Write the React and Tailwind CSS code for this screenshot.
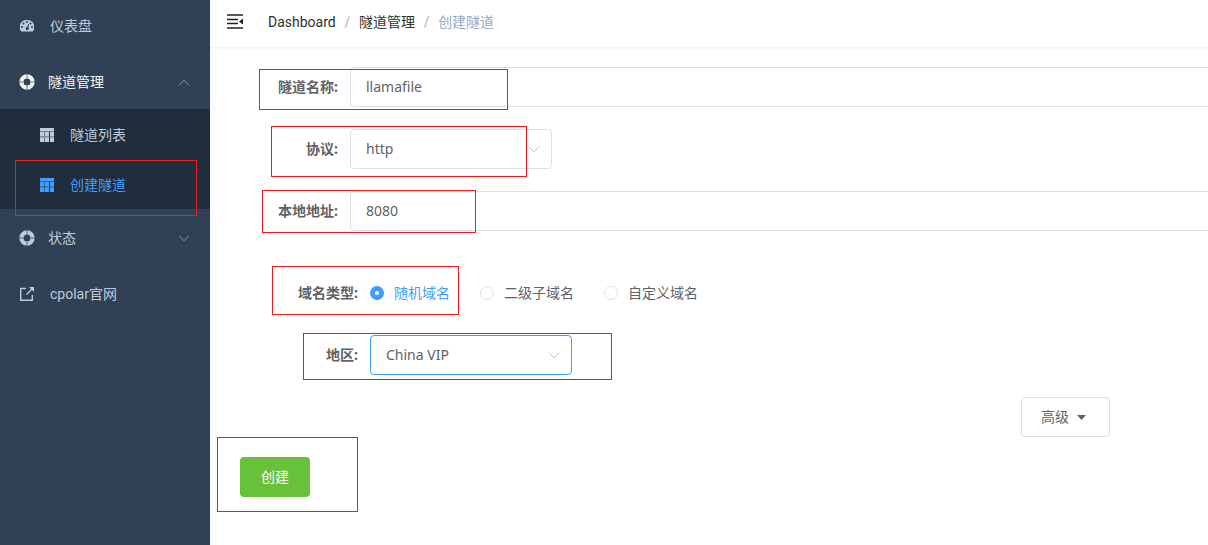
import { useState } from 'react'

function DashboardIcon() {
  return (
    <svg className="mr-4 h-[14px] w-[14px] shrink-0" viewBox="0 0 14 14" fill="currentColor" aria-hidden="true">
      <path
        fillRule="evenodd"
        d="M7 1a7 7 0 0 1 5.9 11.300q-.2.2-.5.2H1.600q-.3 0-.5-.2A7 7 0 0 1 7 1z
          M2 7a1 1 0 1 0 0 2 1 1 0 0 0 0-2z
          M3.500 3.500a1 1 0 1 0 0 2 1 1 0 0 0 0-2z
          M7 2a1 1 0 1 0 0 2 1 1 0 0 0 0-2z
          M10.500 3.500a1 1 0 1 0 0 2 1 1 0 0 0 0-2z
          M12 7a1 1 0 1 0 0 2 1 1 0 0 0 0-2z
          M8.100 5.100l-.8 3a1.500 1.500 0 1 0 .9.3l.8-3q0-.4-.4-.5t-.5.200z"
      />
    </svg>
  )
}

function HelpIcon() {
  return (
    <svg className="-ml-px mr-[13px] h-4 w-4 shrink-0" viewBox="0 0 16 16" fill="none" stroke="currentColor" aria-hidden="true">
      <circle cx="8" cy="8" r="5.600" strokeWidth="4.200" />
      <path d="M8 0v4M8 12v4M0 8h4M12 8h4" stroke="#304156" strokeWidth="0.700" />
    </svg>
  )
}

function TableIcon() {
  return (
    <svg className="mr-4 h-[14px] w-[14px] shrink-0" viewBox="0 0 14 14" fill="currentColor" aria-hidden="true">
      <path d="M0 0h14v3H0zM0 4h4v4.500H0zM5 4h4v4.500H5zM10 4h4v4.500h-4zM0 9.200h4V14H0zM5 9.200h4V14H5zM10 9.200h4V14h-4z" />
      <path d="M0 3h14v1H0zM0 8.500h14v.7H0zM4 4h1v10H4z" opacity="0.5" />
    </svg>
  )
}

function LinkIcon() {
  return (
    <svg className="mr-4 h-[14px] w-[14px] shrink-0" viewBox="0 0 14 14" fill="none" stroke="currentColor" strokeWidth="1.400" aria-hidden="true">
      <path d="M6 1.500H.7v11.800h11.600V8M6.500 7.500l6-6" />
      <path d="M9 0h5v5z" fill="currentColor" stroke="none" />
    </svg>
  )
}

function Chevron({ className }) {
  return (
    <svg className={className} viewBox="0 0 12 7" fill="none" stroke="currentColor" aria-hidden="true">
      <path d="M1 .8 6 5.800 11 .8" />
    </svg>
  )
}

function Mark({ className }) {
  return <span className={`pointer-events-none absolute z-10 border border-[#ed1c24] ${className}`} />
}

function Sidebar() {
  return (
    <nav className="w-[210px] shrink-0 bg-[#304156] font-[Roboto,'Noto_Sans_CJK_SC',sans-serif] text-sm text-[#bfcbd9]">
      <a href="#dashboard" className="flex h-[53px] items-center px-5 pb-[2px]">
        <DashboardIcon />
        仪表盘
      </a>
      <button type="button" className="flex h-14 w-full items-center px-5 pt-[2px] text-[#f4f4f5]">
        <HelpIcon />
        隧道管理
        <Chevron className="ml-auto h-[7px] w-3 rotate-180 text-[#909399]" />
      </button>
      <div className="bg-[#1f2d3d]">
        <a href="#list" className="flex h-[50px] items-center pl-10 pt-px">
          <TableIcon />
          隧道列表
        </a>
        <a href="#create" className="relative flex h-[50px] items-center pl-10 pt-px text-[#409eff]">
          <TableIcon />
          创建隧道
          <Mark className="left-[15px] top-px h-14 w-[182px]" />
        </a>
      </div>
      <button type="button" className="flex h-14 w-full items-center px-5 pt-[2px]">
        <HelpIcon />
        状态
        <Chevron className="ml-auto h-[7px] w-3 text-[#909399]" />
      </button>
      <a href="#site" className="flex h-14 items-center px-5 pt-px">
        <LinkIcon />
        cpolar官网
      </a>
    </nav>
  )
}

function Header() {
  return (
    <header className="flex h-[47px] items-center pl-4 font-[Roboto,'Noto_Sans_CJK_SC',sans-serif] text-sm shadow-[0_1px_4px_rgba(0,21,41,0.08)]">
      <button type="button" aria-label="menu" className="mr-6 pb-[5px]">
        <svg className="h-5 w-[18px]" viewBox="0 0 18 20" aria-hidden="true">
          <path d="M1 4h16M1 8.500h11M1 12.500h11M1 17h16" stroke="#222" strokeWidth="1.700" />
          <path d="M17 7.500v6l-4-3z" fill="#222" />
        </svg>
      </button>
      <ol className="flex items-center pb-[3px] text-[#303133]">
        <li><a href="#dashboard">Dashboard</a></li>
        <li className="mx-[9px] font-bold text-[#c0c4cc]">/</li>
        <li><a href="#tunnels">隧道管理</a></li>
        <li className="mx-[9px] font-bold text-[#c0c4cc]">/</li>
        <li className="text-[#97a8be]">创建隧道</li>
      </ol>
    </header>
  )
}

function FormRow({ label, id, wide, children }) {
  return (
    <div className="relative flex h-10 items-center">
      <label
        htmlFor={id}
        className={`shrink-0 pr-3 text-right font-bold ${wide ? 'w-[130px]' : 'w-[110px]'}`}
      >
        {label}:
      </label>
      {children}
    </div>
  )
}

function Select({ id, value, focused }) {
  return (
    <div className="relative w-[202px]">
      <select
        id={id}
        defaultValue={value}
        className={`h-10 w-full appearance-none rounded border bg-white px-[15px] outline-none ${
          focused ? 'border-[#409eff]' : 'border-[#dcdfe6]'
        }`}
      >
        <option>{value}</option>
      </select>
      <Chevron className="pointer-events-none absolute right-3 top-[17px] h-[7px] w-3 text-[#c0c4cc]" />
    </div>
  )
}

const domainTypes = ['随机域名', '二级子域名', '自定义域名']

function DomainRadios() {
  const [selected, setSelected] = useState(domainTypes[0])

  return (
    <div role="radiogroup" aria-label="域名类型" className="flex gap-[30px]">
      {domainTypes.map(type => (
        <label
          key={type}
          className={`flex items-center gap-[10px] ${selected === type ? 'text-[#409eff]' : ''}`}
        >
          <input
            type="radio"
            name="domain"
            checked={selected === type}
            onChange={() => setSelected(type)}
            className="h-[14px] w-[14px] appearance-none rounded-full border border-[#dcdfe6] bg-white checked:border-[5px] checked:border-[#409eff]"
          />
          {type}
        </label>
      ))}
    </div>
  )
}

export default function App() {
  return (
    <div className="flex min-h-screen bg-white font-['Noto_Sans','Noto_Sans_CJK_SC',sans-serif] text-[#606266]">
      <Sidebar />
      <main className="min-w-0 flex-1 overflow-hidden">
        <Header />
        <form className="pl-[30px] pt-5 text-sm" onSubmit={e => e.preventDefault()}>
          <div className="flex flex-col gap-[22px]">
            <FormRow label="隧道名称" id="name">
              <input id="name" defaultValue="llamafile" className="-mr-5 h-10 flex-1 rounded border border-[#dcdfe6] px-[15px] pb-[2px] outline-none" />
              <Mark className="left-[19px] top-[2px] h-[41px] w-[249px]" />
            </FormRow>
            <FormRow label="协议" id="protocol">
              <Select id="protocol" value="http" />
              <Mark className="left-[31px] top-[-3px] h-[51px] w-[256px]" />
            </FormRow>
            <FormRow label="本地地址" id="address">
              <input id="address" defaultValue="8080" className="-mr-5 h-10 flex-1 rounded border border-[#dcdfe6] px-[15px] pb-[2px] outline-none" />
              <Mark className="left-[22px] top-[-1px] h-[43px] w-[214px]" />
            </FormRow>
          </div>
          <div className="mt-[42px] flex flex-col gap-[22px]">
            <FormRow label="域名类型" wide>
              <DomainRadios />
              <Mark className="left-[32px] top-[-7px] h-[49px] w-[187px]" />
            </FormRow>
            <FormRow label="地区" id="region" wide>
              <Select id="region" value="China VIP" focused />
              <Mark className="left-[63px] top-[-2px] h-[47px] w-[309px]" />
            </FormRow>
            <div className="flex justify-end pr-[98px]">
              <button type="button" className="flex h-10 items-center gap-2 rounded border border-[#dcdfe6] pl-[19px] pr-[23px]">
                高级
                <svg className="h-[5px] w-[9px]" viewBox="0 0 9 5" fill="currentColor" aria-hidden="true">
                  <path d="M0 0h9L4.500 5z" />
                </svg>
              </button>
            </div>
          </div>
          <div className="relative mt-5">
            <button type="submit" className="h-10 w-[70px] rounded bg-[#67c23a] text-white">创建</button>
            <Mark className="left-[-23px] top-[-20px] h-[75px] w-[141px]" />
          </div>
        </form>
      </main>
    </div>
  )
}
